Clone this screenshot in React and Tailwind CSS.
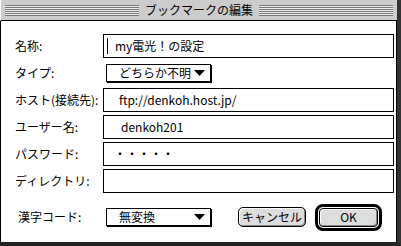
export default function App() {
  const font = { fontFamily: '"Noto Sans CJK JP", "Noto Sans", sans-serif' };
  const Field = ({ children }) => (
    <div className="h-[24px] w-[291px] border border-black bg-white flex items-center text-[12px] leading-none text-black">
      {children}
    </div>
  );
  const Label = ({ children, cls = "" }) => (
    <div className={"w-[88px] text-[12px] text-black leading-none " + cls}>{children}</div>
  );
  const Arrow = () => (
    <svg width="11" height="6" viewBox="0 0 11 6" className="shrink-0">
      <polygon points="0,0 11,0 5.5,6" fill="#000" />
    </svg>
  );
  const Dropdown = ({ children }) => (
    <div className="ml-[3px] h-[18px] w-[105px] border border-black bg-white shadow-[1px_1px_0_#000] flex items-center pl-[12px] pr-[5px] text-[12px] leading-none text-black">
      <span className="flex-1">{children}</span>
      <Arrow />
    </div>
  );
  return (
    <div className="w-[401px] h-[246px] bg-white" style={font}>
      <div className="flex flex-col w-[401px] h-[246px] border-r-[4px] border-r-[#333] border-b-[4px] border-b-[#222]">
        {/* title bar */}
        <div className="h-[21px] bg-[#cccccc] border-b border-black border-l border-l-white flex items-center px-[4px]">
          <div className="flex-1 h-[11px] bg-[repeating-linear-gradient(to_bottom,#777_0px,#777_1px,#eeeeee_1px,#eeeeee_2px)]" />
          <div className="px-[6px] text-[12px] leading-none text-black">ブックマークの編集</div>
          <div className="flex-1 h-[11px] bg-[repeating-linear-gradient(to_bottom,#777_0px,#777_1px,#eeeeee_1px,#eeeeee_2px)]" />
        </div>
        {/* body */}
        <div className="flex-1 border-l border-black border-r border-r-black pl-[14px] pt-[12px] flex flex-col gap-[2px]">
          <div className="flex items-center h-[25px]">
            <Label>名称:</Label>
            <Field>
              <span className="ml-[3px] w-[1px] h-[16px] bg-black" />
              <span className="ml-[7px]">my電光！の設定</span>
            </Field>
          </div>
          <div className="flex items-center h-[25px]">
            <Label>タイプ:</Label>
            <Dropdown>どちらか不明</Dropdown>
          </div>
          <div className="flex items-center h-[25px]">
            <Label>ホスト(接続先):</Label>
            <Field><span className="ml-[15px]">ftp://denkoh.host.jp/</span></Field>
          </div>
          <div className="flex items-center h-[25px]">
            <Label>ユーザー名:</Label>
            <Field><span className="ml-[17px]">denkoh201</span></Field>
          </div>
          <div className="flex items-center h-[25px]">
            <Label>パスワード:</Label>
            <Field><span className="ml-[10px]">・・・・・</span></Field>
          </div>
          <div className="flex items-center h-[25px]">
            <Label>ディレクトリ:</Label>
            <Field />
          </div>
          <div className="flex items-center h-[28px] mt-[8px]">
            <Label cls="pl-[3px]">漢字コード:</Label>
            <Dropdown>無変換</Dropdown>
            <div className="ml-[27px] h-[20px] w-[68px] rounded-[5px] border border-black bg-[#dddddd] shadow-[inset_1px_1px_0_#fff,inset_-1px_-1px_0_#888] flex items-center justify-center text-[12px] leading-none text-black">
              キャンセル
            </div>
            <div className="ml-[9px] h-[27px] w-[67px] rounded-[8px] border-[3px] border-black p-[1px] flex">
              <div className="flex-1 rounded-[4px] border border-black bg-[#dddddd] shadow-[inset_1px_1px_0_#fff,inset_-1px_-1px_0_#888] flex items-center justify-center text-[12px] leading-none text-black">
                OK
              </div>
            </div>
          </div>
        </div>
      </div>
    </div>
  );
}
